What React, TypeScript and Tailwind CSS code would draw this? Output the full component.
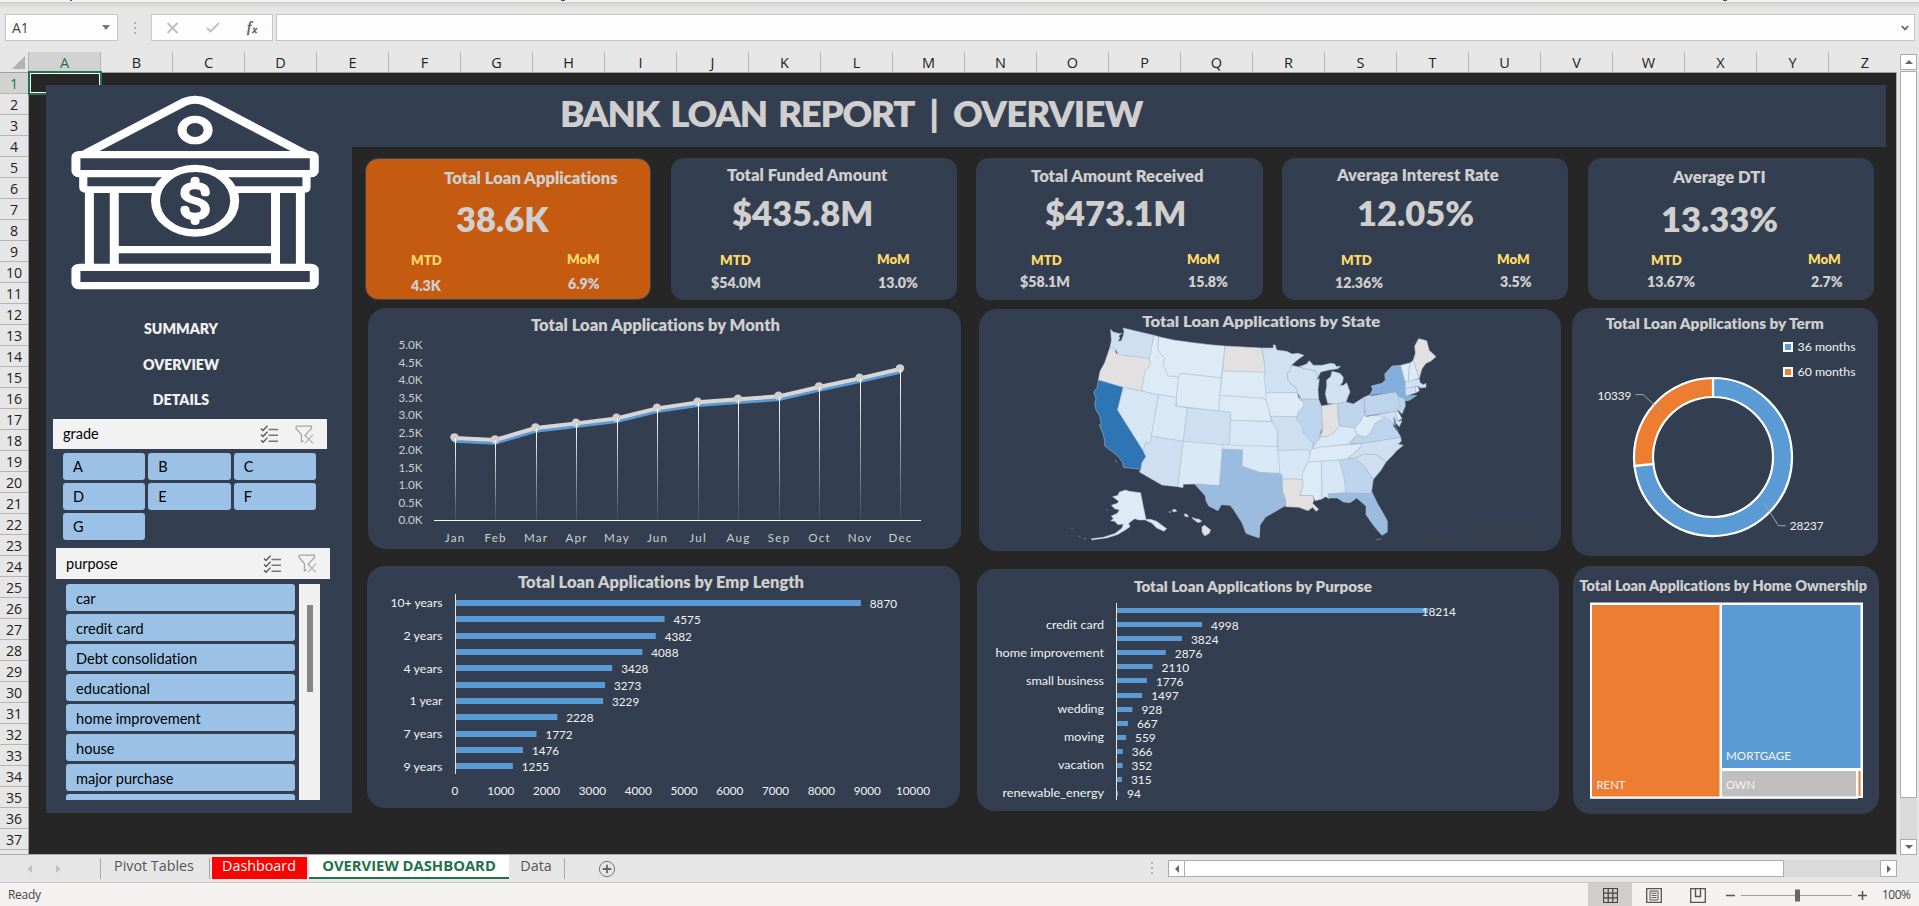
import React from "react";

const columns = "ABCDEFGHIJKLMNOPQRSTUVWXYZ".split("");
const rows = Array.from({ length: 37 }, (_, i) => i + 1);

type TProps = {
  x: number;
  y: number;
  w?: number;
  size?: number;
  anchor?: "start" | "middle" | "end";
  className?: string;
  children: React.ReactNode;
};

/* Chart label, y is the vertical centre of the capitals. */
function T({ x, y, w, size = 11.7, anchor = "start", className = "fill-[#f2f2f2]", children }: TProps) {
  return (
    <text
      x={x}
      y={y + size * 0.36}
      fontSize={size}
      textAnchor={anchor}
      textLength={w}
      lengthAdjust="spacingAndGlyphs"
      className={className}
    >
      {children}
    </text>
  );
}

const titleClass = "fill-[#d0cece] font-extrabold";

type Kpi = {
  title: string;
  total: string;
  mtd: string;
  mom: string;
  box: string;
  titlePos: string;
  totalPos: string;
  mtdPos: string;
  momPos: string;
  mtdValuePos: string;
  momValuePos: string;
};

const kpis: Kpi[] = [
  {
    title: "Total Loan Applications", total: "38.6K", mtd: "4.3K", mom: "6.9%",
    box: "w-[286px] bg-[#c55a11] border border-[#3c4454]",
    titlePos: "pl-[78px] pt-[9px]", totalPos: "pl-[90px] pt-[9px]",
    mtdPos: "left-[45px] top-[92px]", momPos: "left-[201px] top-[91px]",
    mtdValuePos: "left-[45px] top-[117px]", momValuePos: "left-[202px] top-[115px]",
  },
  {
    title: "Total Funded Amount", total: "$435.8M", mtd: "$54.0M", mom: "13.0%",
    box: "w-[286px] ml-[20px] bg-[#333f50]",
    titlePos: "pl-[56px] pt-[7px]", totalPos: "pl-[61px] pt-[6px]",
    mtdPos: "left-[49px] top-[93px]", momPos: "left-[206px] top-[92px]",
    mtdValuePos: "left-[40px] top-[115px]", momValuePos: "left-[207px] top-[115px]",
  },
  {
    title: "Total Amount Received", total: "$473.1M", mtd: "$58.1M", mom: "15.8%",
    box: "w-[287px] ml-[19px] bg-[#333f50]",
    titlePos: "pl-[55px] pt-[8px]", totalPos: "pl-[69px] pt-[5px]",
    mtdPos: "left-[55px] top-[93px]", momPos: "left-[211px] top-[92px]",
    mtdValuePos: "left-[44px] top-[114px]", momValuePos: "left-[212px] top-[114px]",
  },
  {
    title: "Averaga Interest Rate", total: "12.05%", mtd: "12.36%", mom: "3.5%",
    box: "w-[286px] ml-[19px] bg-[#333f50]",
    titlePos: "pl-[55px] pt-[7px]", totalPos: "pl-[75px] pt-[6px]",
    mtdPos: "left-[59px] top-[93px]", momPos: "left-[215px] top-[92px]",
    mtdValuePos: "left-[53px] top-[115px]", momValuePos: "left-[218px] top-[114px]",
  },
  {
    title: "Average DTI", total: "13.33%", mtd: "13.67%", mom: "2.7%",
    box: "w-[286px] ml-[20px] bg-[#333f50]",
    titlePos: "pl-[85px] pt-[9px]", totalPos: "pl-[73px] pt-[10px]",
    mtdPos: "left-[63px] top-[93px]", momPos: "left-[220px] top-[92px]",
    mtdValuePos: "left-[59px] top-[114px]", momValuePos: "left-[223px] top-[114px]",
  },
];

function KpiCard({ k }: { k: Kpi }) {
  return (
    <div className={`relative flex h-[142px] flex-col rounded-[13px] font-extrabold whitespace-nowrap text-[#d0cece] ${k.box}`}>
      <div className={`text-[16.6px] leading-[20px] ${k.titlePos}`}>{k.title}</div>
      <div className={`text-[34.5px] leading-[44px] ${k.totalPos}`}>{k.total}</div>
      <span className={`absolute text-[13.2px] leading-[18px] text-[#ffd966] ${k.mtdPos}`}>MTD</span>
      <span className={`absolute text-[13.2px] leading-[18px] text-[#ffd966] ${k.momPos}`}>MoM</span>
      <span className={`absolute text-[14.2px] leading-[20px] ${k.mtdValuePos}`}>{k.mtd}</span>
      <span className={`absolute text-[14.2px] leading-[20px] ${k.momValuePos}`}>{k.mom}</span>
    </div>
  );
}

function BankIcon() {
  return (
    <svg className="block h-[210px] w-[306px]" viewBox="46 85 306 210" fill="none">
      <g transform="scale(0.40816 0.33333)" stroke="#fff" strokeWidth="22">
        <path d="M208 462 L450 307 Q478 291 506 307 L748 462" strokeWidth="24" strokeLinejoin="round" />
        <circle cx="478" cy="390" r="32" />
        <rect x="186" y="464" width="584" height="57" rx="8" />
        <path d="M204 526 V562 Q204 569 212 569 H744 Q751 569 751 562 V526" strokeWidth="20" />
        <path d="M219 578 V793 M280 578 V793 M675 578 V793 M736 578 V793 M291 749 H664" />
        <rect x="186" y="802" width="584" height="55" rx="8" />
        <circle cx="478" cy="602" r="97" fill="#333f50" />
        <path d="M503 578 Q503 557 478 557 Q453 557 453 579 Q453 595 478 602 Q503 609 503 628 Q503 649 478 649 Q453 649 453 628 M478 541 V557 M478 649 V664" strokeWidth="22" strokeLinecap="round" />
      </g>
    </svg>
  );
}

function MultiSelectIcon() {
  return (
    <svg className="h-[18px] w-[18px]" viewBox="0 0 18 18" fill="none">
      <path d="M1 3.5 3 5.5 7.5 .8 M1 9.5 3 11.5 7.5 6.8 M1 15.3 3 17.3 7.5 12.6" stroke="#555" strokeWidth="1.3" />
      <path d="M8.5 4.5H18 M8.5 10.2H18 M8.5 16.2H18" stroke="#777" strokeWidth="1.4" />
    </svg>
  );
}

function ClearFilterIcon() {
  return (
    <svg className="h-[19px] w-[19px]" viewBox="0 0 19 19" fill="none" stroke="#a3a3a3" strokeWidth="1.2">
      <path d="M1 1.2H16.5V3.5L10.7 9.6V12 M1 1.2V3.5L6.4 9.6V17L8.6 15.6" />
      <path d="M9.5 10 18 18.3 M18 9.6 9.8 18.4" stroke="#b5b5b5" />
    </svg>
  );
}

function SlicerHeader({ label, className }: { label: string; className: string }) {
  return (
    <div className={`flex w-[274px] shrink-0 items-center bg-[#f2f2f2] pl-[10px] ${className}`}>
      <span className="grow text-[14.5px] leading-[20px] text-black">{label}</span>
      <MultiSelectIcon />
      <div className="w-[17px]" />
      <ClearFilterIcon />
      <div className="w-[13px]" />
    </div>
  );
}

const purposes = ["car", "credit card", "Debt consolidation", "educational", "home improvement", "house", "major purchase", ""];

function Sidebar() {
  return (
    <aside className="relative z-10 flex h-[728px] w-[306px] flex-col bg-[#333f50]">
      <BankIcon />
      <nav className="flex h-[124px] w-[270px] shrink-0 flex-col pt-[16px] text-center text-[14.2px] leading-[35.5px] font-extrabold text-[#f2f2f2]">
        <a>SUMMARY</a>
        <a>OVERVIEW</a>
        <a>DETAILS</a>
      </nav>
      <SlicerHeader label="grade" className="ml-[7px] h-[30px]" />
      <div className="mt-[4px] ml-[17px] grid w-[253px] shrink-0 grid-cols-3 gap-[3px]">
        {["A", "B", "C", "D", "E", "F", "G"].map((g) => (
          <div key={g} className="h-[27px] rounded-[3px] bg-[#9bc2e6] pl-[10px] text-[14.5px] leading-[28px] text-black">{g}</div>
        ))}
      </div>
      <SlicerHeader label="purpose" className="mt-[8px] ml-[10px] h-[31px]" />
      <div className="mt-[5px] ml-[20px] flex h-[216px] shrink-0 gap-[4px]">
        <div className="flex w-[229px] flex-col gap-[3px] overflow-hidden">
          {purposes.map((p) => (
            <div key={p} className="h-[27px] shrink-0 rounded-[3px] bg-[#9bc2e6] pl-[10px] text-[14.6px] leading-[29px] text-black">{p}</div>
          ))}
        </div>
        <div className="flex w-[21px] justify-center bg-[#f0f0f0] pt-[21px]">
          <div className="h-[87px] w-[6px] bg-[#868686]" />
        </div>
      </div>
    </aside>
  );
}

const monthly = [
  ["Jan", 412], ["Feb", 418], ["Mar", 382], ["Apr", 368], ["May", 353], ["Jun", 323],
  ["Jul", 305], ["Aug", 296], ["Sep", 287], ["Oct", 259], ["Nov", 233], ["Dec", 205],
] as [string, number][];

function MonthChart() {
  const pts = monthly.map(([m, v], i) => ({ m, x: 454.5 + i * 40.5, y: 300 + v / 3 }));
  const line = (dy: number) => pts.map((p) => `${p.x},${p.y + dy}`).join(" ");
  return (
    <svg className="block h-[241px] w-[593px] rounded-[18px] bg-[#333f50]" viewBox="368 308 593 241">
      <defs>
        <linearGradient id="drop" x1="0" y1="0" x2="0" y2="1">
          <stop offset="0" stopColor="#fff" />
          <stop offset="1" stopColor="#fff" stopOpacity="0.05" />
        </linearGradient>
      </defs>
      <T x={531} y={325} w={249} size={16.2} className={titleClass}>Total Loan Applications by Month</T>
      {Array.from({ length: 11 }, (_, i) => (
        <T key={i} x={422.5} y={345 + i * 17.5} w={24} anchor="end" className="fill-[#d0cece]">{(5 - i * 0.5).toFixed(1) + "K"}</T>
      ))}
      <rect x="434" y="520" width="487" height="1" fill="#f5f5f5" />
      <polyline points={line(3.6)} fill="none" stroke="#5b9bd5" strokeWidth="3.6" strokeLinejoin="round" strokeLinecap="round" />
      <polyline points={line(0.7)} fill="none" stroke="#d9d5d5" strokeWidth="4" strokeLinejoin="round" />
      {pts.map((p) => (
        <g key={p.m}>
          <circle cx={p.x} cy={p.y} r="4.2" fill="#d0cece" />
          <rect x={Math.round(p.x)} y={p.y + 1} width="1" height={519 - p.y} fill="url(#drop)" />
          <text x={p.x + 0.6} y={542} fontSize="11.6" letterSpacing="1.25" textAnchor="middle" fill="#d0cece">{p.m}</text>
        </g>
      ))}
    </svg>
  );
}

const emp = [
  ["10+ years", 8870, 52], ["", 4575, 0], ["2 years", 4382, 39], ["", 4088, 0], ["4 years", 3428, 39], ["", 3273, 0],
  ["1 year", 3229, 33], ["", 2228, 0], ["7 years", 1772, 39], ["", 1476, 0], ["9 years", 1255, 39],
] as [string, number, number][];

function EmpChart() {
  return (
    <svg className="block h-[242px] w-[593px] rounded-[18px] bg-[#333f50]" viewBox="367 566 593 242">
      <T x={518} y={582} w={286} size={16.2} className={titleClass}>Total Loan Applications by Emp Length</T>
      {emp.map(([label, v, w], i) => {
        const y = 603 + i * 16.32;
        return (
          <g key={v}>
            {label && <T x={442.5} y={y} w={w} size={12} anchor="end">{label}</T>}
            <rect x="455.5" y={Math.round(y - 3)} width={v * 0.0457} height="6" fill="#5b9bd5" />
            <T x={455.5 + v * 0.0457 + 9} y={y + 0.8}>{v}</T>
          </g>
        );
      })}
      <rect x="455" y="594" width="1" height="180" fill="#e6e6e6" />
      {Array.from({ length: 11 }, (_, i) => (
        <T key={i} x={455 + i * 45.8} y={791} anchor="middle">{i * 1000}</T>
      ))}
    </svg>
  );
}

const purposeData = [
  ["", 18214, 0], ["credit card", 4998, 58], ["", 3824, 0], ["home improvement", 2876, 108.5], ["", 2110, 0],
  ["small business", 1776, 78], ["", 1497, 0], ["wedding", 928, 46.5], ["", 667, 0], ["moving", 559, 40],
  ["", 366, 0], ["vacation", 352, 46], ["", 315, 0], ["renewable_energy", 94, 101.5],
] as [string, number, number][];

function PurposeChart() {
  return (
    <svg className="block h-[242px] w-[582px] rounded-[18px] bg-[#333f50]" viewBox="977 569 582 242">
      <T x={1134} y={586.4} w={238} size={15.2} className={titleClass}>Total Loan Applications by Purpose</T>
      {purposeData.map(([label, v, w], i) => {
        const y = 610.7 + i * 14.05;
        return (
          <g key={v}>
            {label && <T x={1104} y={y - 0.3} w={w} size={12.2} anchor="end">{label}</T>}
            <rect x="1116.5" y={Math.round(y - 2.5)} width={v * 0.01712} height="5" fill="#5b9bd5" />
            <T x={v > 18000 ? 1421.5 : 1116.5 + v * 0.01712 + 9} y={y + 0.7} size={11.9}>{v}</T>
          </g>
        );
      })}
      <rect x="1116" y="603" width="1" height="197" fill="#e6e6e6" />
    </svg>
  );
}

const states: [string, string, string][] = [
  ["WA", "#cddff0", "M152 88L160 96 180 101 186 100 176 108 180 114 174 124 184 122 190 106 192 94 189 84 282 106 268 176 232 171 196 167 174 162 168 150 150 142 154 122Z"],
  ["OR", "#e2e0e0", "M150 142L164 146 168 160 196 167 232 171 266 176 272 188 262 206 255 214 245 272 190 262 115 240 120 214 134 188Z"],
  ["CA", "#2e75b6", "M115 240L190 262 173 330 250 452 258 470 246 488 243 508 190 502 188 488 176 472 166 462 150 450 134 438 134 422 130 404 118 374 124 370 118 346 108 330 104 312 108 296 101 276 112 262Z"],
  ["NV", "#d6e6f4", "M190 262L296 284 274 408 270 430 258 426 250 452 173 330Z"],
  ["ID", "#ddebf7", "M282 106L296 110 293 144 300 158 314 174 308 198 316 206 324 228 356 230 349 292 296 284 245 272 255 214 262 206 272 188 268 176Z"],
  ["MT", "#ddebf7", "M296 110L340 120 400 128 450 134 495 138 484 234 362 220 356 230 324 228 316 206 308 198 314 174 300 158 293 144Z"],
  ["WY", "#ddebf7", "M362 220L484 234 476 333 349 318 349 292 356 230Z"],
  ["UT", "#d9e8f6", "M296 284L349 292 347 318 382 324 370 424 274 408Z"],
  ["CO", "#cddff0", "M382 324L512 336 508 437 370 424Z"],
  ["AZ", "#cddff0", "M274 408L370 424 353 560 306 555 238 516 243 508 246 488 258 470 250 452 258 426 270 430Z"],
  ["NM", "#d9e8f6", "M370 424L488 434 478 557 404 552 370 553 369 563 353 560Z"],
  ["ND", "#e2e0e0", "M495 138L606 144 612 180 616 217 488 213Z"],
  ["SD", "#ddebf7", "M488 213L616 217 614 230 618 278 618 300 606 294 590 294 480 286Z"],
  ["NE", "#ddebf7", "M480 286L590 294 606 294 618 300 626 324 634 364 512 361 512 336 476 333Z"],
  ["KS", "#d9e8f6", "M512 361L638 365 642 376 652 388 652 440 508 437Z"],
  ["OK", "#d9e8f6", "M488 434L652 440 658 480 660 520 630 520 600 517 572 508 546 498 548 450 487 447Z"],
  ["TX", "#9bbcdf", "M487 447L548 450 546 498 572 508 600 517 660 520 667 526 668 574 678 602 674 618 650 632 616 652 600 676 598 714 580 708 558 700 546 668 520 628 510 616 484 614 474 632 446 618 438 602 436 588 404 552 478 557Z"],
  ["MN", "#cfe1f2", "M606 144L640 144 640 134 646 136 650 150 680 154 696 162 714 160 732 166 712 180 694 196 690 212 682 220 684 242 712 268 712 278 618 278 612 230 616 217 612 180Z"],
  ["IA", "#ddebf7", "M618 278L712 278 716 296 732 308 730 322 714 336 712 350 632 349 626 324 618 300Z"],
  ["MO", "#cddff0", "M632 349L710 350 712 364 730 382 728 396 748 418 760 432 756 446 750 462 742 450 654 451 652 388 642 376Z"],
  ["AR", "#d6e6f4", "M654 451L742 450 750 462 746 484 736 500 728 520 727 538 668 537 667 526 660 520Z"],
  ["LA", "#e2e0e0", "M668 537L727 538 730 556 720 586 757 586 762 600 758 610 776 628 768 634 758 622 744 632 716 622 676 620 678 602 668 574Z"],
  ["WI", "#cfe1f2", "M694 196L714 200 740 208 766 212 774 226 770 240 778 236 774 270 776 298 724 297 712 278 712 268 684 242 682 220 690 212Z"],
  ["UP", "#cfe1f2", "M718 200L740 192 748 182 760 196 786 196 812 190 824 192 830 200 842 198 834 206 806 210 782 216 770 240 774 226 766 212 740 208Z"],
  ["MI", "#cfe1f2", "M803 310L796 282 800 258 800 240 812 230 816 214 840 220 850 232 848 246 840 256 850 256 860 248 870 276 864 290 858 306 832 312Z"],
  ["IL", "#bdd4ec", "M724 297L776 298 784 318 788 384 780 400 778 412 766 434 748 418 728 396 730 382 712 364 714 336 730 322 732 308Z"],
  ["IN", "#e2e0e0", "M784 318L832 310 838 380 820 400 800 410 782 412 788 384Z"],
  ["OH", "#bdd4ec", "M832 312L858 306 880 312 912 292 914 340 900 366 884 384 860 380 838 378Z"],
  ["KY", "#d9e8f6", "M760 446L764 434 782 412 800 410 820 400 838 378 860 380 884 384 892 404 866 432 780 442Z"],
  ["TN", "#ddebf7", "M754 448L780 442 908 430 896 448 862 476 838 480 744 486Z"],
  ["MS", "#ddebf7", "M744 486L784 484 786 597 766 602 757 586 720 586 730 556 727 538 728 520Z"],
  ["AL", "#d6e6f4", "M784 484L838 480 852 530 858 578 804 582 808 596 796 590 786 597Z"],
  ["GA", "#bdd4ec", "M838 480L884 474 914 500 940 538 934 580 858 580 852 530Z"],
  ["FL", "#9bbcdf", "M804 582L858 578 934 580 934 572 952 610 972 644 982 664 982 696 966 706 950 688 936 670 918 644 918 618 890 594 870 608 850 606 832 594 808 594Z"],
  ["SC", "#cddff0", "M884 474L912 462 950 464 978 486 962 512 940 538 914 500Z"],
  ["NC", "#cddff0", "M908 430L1022 412 1024 424 1014 432 1030 436 1010 452 996 468 978 486 950 464 912 462 884 474 862 476 896 448Z"],
  ["VA", "#bdd4ec", "M866 432L892 404 916 412 930 400 946 370 972 348 996 358 1000 378 1016 400 1022 412 908 430Z"],
  ["WV", "#ddebf7", "M914 340L918 350 944 346 970 346 972 352 946 370 930 400 916 412 892 404 884 384 900 366Z"],
  ["MD", "#cfe1f2", "M944 346L1006 334 1014 364 1026 362 1018 380 1008 370 1000 350 1004 376 990 360 972 350Z"],
  ["DE", "#ddebf7", "M1006 334L1014 334 1026 356 1014 362Z"],
  ["PA", "#bdd4ec", "M912 292L930 284 932 288 1006 276 1018 292 1014 304 1022 318 1010 334 916 348Z"],
  ["NJ", "#bdd4ec", "M1018 288L1034 296 1036 318 1026 342 1012 328 1022 318 1014 304Z"],
  ["NY", "#84aedb", "M930 284L938 268 934 258 966 250 976 240 974 222 996 198 1022 196 1030 226 1036 246 1038 288 1070 286 1050 300 1034 304 1032 296 1018 292 1006 276Z"],
  ["VT", "#ddebf7", "M1022 196L1052 188 1046 216 1046 246 1036 246 1030 226Z"],
  ["NH", "#ddebf7", "M1052 188L1060 180 1070 212 1078 234 1046 246 1046 216Z"],
  ["ME", "#e2e0e0", "M1060 180L1066 160 1064 138 1076 116 1092 120 1100 122 1108 152 1116 158 1128 170 1112 184 1098 190 1086 206 1078 234 1070 212Z"],
  ["MA", "#cfe1f2", "M1036 246L1078 236 1080 248 1090 254 1098 250 1098 262 1082 264 1074 258 1036 266Z"],
  ["CT", "#cfe1f2", "M1036 266L1066 260 1068 278 1038 288Z"],
  ["RI", "#ddebf7", "M1066 260L1074 260 1078 272 1068 278Z"],
  ["AK", "#ddebf7", "M158 590L174 586 178 576 196 570 208 574 242 578 250 620 258 658 272 658 290 664 304 674 320 686 312 694 290 684 276 670 256 660 236 660 224 656 206 670 210 680 196 690 172 704 140 714 110 718 96 720 94 716 130 712 166 700 186 684 190 672 174 674 164 664 152 662 160 656 154 648 172 640 178 630 164 626 154 616 172 610 176 604Z"],
  ["H1", "#e2e0e0", "M426 680L434 676 452 690 448 700 434 708 426 696Z"],
  ["H2", "#e2e0e0", "M396 652L406 656 418 658 426 664 414 668 400 658Z"],
  ["H3", "#e2e0e0", "M372 642L380 642 386 650 376 650Z"],
  ["H4", "#e2e0e0", "M336 630L346 628 350 634 340 636Z"],
  ["H5", "#e2e0e0", "M328 634L332 636 328 638Z"],
];

function StateMap() {
  return (
    <svg className="block h-[242px] w-[582px] rounded-[18px] bg-[#333f50]" viewBox="979 309 582 242">
      <g transform="translate(1060 300) scale(0.33333)" stroke="#b2c1d1" strokeWidth="1.6" strokeLinejoin="round">
        <path d="M180 160L290 130 600 160 640 250 710 290 770 310 770 400 880 400 860 480 900 560 790 570 660 560 600 600 500 560 300 520 200 400 140 260Z" fill="#b2c1d1" />
        {states.map(([id, fill, d]) => (
          <path key={id} d={d} fill={fill} />
        ))}
        <path d="M34 685h4M56 708l6 3M70 715l8 2M138 628l5 3M150 442l-4-4M948 720l16-4M166 478l4 10M1004 352l4 30 8 12" fill="none" stroke="#7d8a9b" strokeWidth="2.5" />
      </g>
      <T x={1142.3} y={322} w={238} size={15.2} className={titleClass}>Total Loan Applications by State</T>
      <text x={1535} y={531} fontSize="8.5" textAnchor="end" fill="#3b4047">Powered by Bing</text>
      <text x={1535} y={541} fontSize="8.5" textAnchor="end" fill="#3b4047">© GeoNames, Microsoft, TomTom</text>
    </svg>
  );
}

function TermChart() {
  const cx = 1713;
  const cy = 457;
  const a = (-96.5 * Math.PI) / 180;
  const at = (r: number) => `${cx + r * Math.sin(a)} ${cy - r * Math.cos(a)}`;
  const ro = 79;
  const ri = 60;
  return (
    <svg className="block h-[248px] w-[306px] rounded-[18px] bg-[#333f50]" viewBox="1572 308 306 248">
      <T x={1605.7} y={323.5} w={218} size={14.4} className={titleClass}>Total Loan Applications by Term</T>
      <rect x="1784" y="343" width="8" height="8" fill="#5b9bd5" stroke="#fff" strokeWidth="2" />
      <T x={1797.5} y={347} w={58}>36 months</T>
      <rect x="1784" y="368" width="8" height="8" fill="#ed7d31" stroke="#fff" strokeWidth="2" />
      <T x={1797.5} y={372} w={58}>60 months</T>
      <g stroke="#fff" strokeWidth="2.2">
        <path d={`M${cx} ${cy - ro}A${ro} ${ro} 0 1 1 ${at(ro)}L${at(ri)}A${ri} ${ri} 0 1 0 ${cx} ${cy - ri}Z`} fill="#5b9bd5" />
        <path d={`M${at(ro)}A${ro} ${ro} 0 0 1 ${cx} ${cy - ro}V${cy - ri}A${ri} ${ri} 0 0 0 ${at(ri)}Z`} fill="#ed7d31" />
      </g>
      <path d="M1635.5 394.6H1643L1661.7 411.5M1764 503L1778.5 525.7H1785.5" fill="none" stroke="#a6a6a6" />
      <T x={1597.5} y={396}>10339</T>
      <T x={1789.7} y={526}>28237</T>
    </svg>
  );
}

function HomeChart() {
  return (
    <svg className="block h-[248px] w-[306px] rounded-[18px] bg-[#333f50]" viewBox="1573 566 306 248">
      <T x={1579.5} y={585.5} w={287.5} size={14.4} className={titleClass}>Total Loan Applications by Home Ownership</T>
      <rect x="1590" y="602.5" width="273" height="195.5" fill="#fff" />
      <rect x="1590" y="798" width="268" height="1" fill="#d5d8dc" />
      <rect x="1592" y="605" width="127.5" height="191.5" fill="#ed7d31" />
      <rect x="1722" y="605" width="138.5" height="163" fill="#5b9bd5" />
      <rect x="1722" y="771" width="134" height="25.5" fill="#bfbfbf" />
      <rect x="1858.5" y="771" width="2" height="25" fill="#ed7d31" />
      <T x={1596.5} y={785} w={29}>RENT</T>
      <T x={1726} y={756} w={65}>MORTGAGE</T>
      <T x={1726} y={785} w={29}>OWN</T>
    </svg>
  );
}

function Dashboard() {
  return (
    <>
      <Sidebar />
      <main className="flex w-[1534px] flex-col">
        <h1 className="h-[62px] bg-[#333f50] pl-[208px] text-[36.6px] leading-[57px] font-extrabold tracking-[-1.3px] [word-spacing:4px] whitespace-nowrap text-[#d0cece]">
          BANK LOAN REPORT <span className="mr-[4px] ml-[5px]">|</span> <span className="tracking-[-0.8px]">OVERVIEW</span>
        </h1>
        <section className="mt-[11px] ml-[13px] flex">
          {kpis.map((k) => <KpiCard key={k.title} k={k} />)}
        </section>
        <section className="mt-[8px] ml-[16px] flex">
          <MonthChart />
          <div className="mt-[1px] ml-[18px]"><StateMap /></div>
          <div className="ml-[11px]"><TermChart /></div>
        </section>
        <section className="mt-[10px] ml-[15px] flex">
          <EmpChart />
          <div className="mt-[3px] ml-[17px]"><PurposeChart /></div>
          <div className="ml-[14px]"><HomeChart /></div>
        </section>
      </main>
    </>
  );
}

function FormulaBar() {
  return (
    <div className="flex h-[27px] shrink-0 pl-[5px] font-['Open_Sans',sans-serif]">
      <div className="flex w-[113px] items-center justify-between border border-[#c6c6c6] bg-[#fdfdfd] pr-[7px] pl-[6px]">
        <span className="text-[14px] text-[#444]">A1</span>
        <svg className="h-[5px] w-[8px]" viewBox="0 0 8 5"><path d="M0 0H8L4 5Z" fill="#777" /></svg>
      </div>
      <div className="flex w-[33px] items-center justify-center">
        <svg className="h-[12px] w-[2px]" viewBox="0 0 2 12"><path d="M0 0h2v2H0zM0 5h2v2H0zM0 10h2v2H0z" fill="#b0b0b0" /></svg>
      </div>
      <div className="flex w-[122px] items-center border border-[#c6c6c6] bg-[#fdfdfd] pl-[14px]">
        <svg className="h-[12px] w-[13px]" viewBox="0 0 13 12"><path d="M1.5 1L11.5 11M11.5 1L1.5 11" stroke="#bdbdbd" strokeWidth="1.8" /></svg>
        <svg className="ml-[27px] h-[11px] w-[14px]" viewBox="0 0 14 11"><path d="M1 6L4.5 9.5 13 1" fill="none" stroke="#c2c2c2" strokeWidth="2" /></svg>
        <svg className="ml-[26px] h-[18px] w-[14px] font-['Liberation_Serif',serif] italic" viewBox="0 0 14 18" fill="#555" stroke="#555" strokeWidth="0.4">
          <text x="1" y="13" fontSize="15">f</text>
          <text x="6.2" y="14" fontSize="11">x</text>
        </svg>
      </div>
      <div className="ml-[3px] flex w-[1639px] items-center justify-end border border-[#c6c6c6] bg-[#fdfdfd] pr-[5px]">
        <svg className="h-[6px] w-[8px]" viewBox="0 0 8 6"><path d="M.8 1L4 4.4 7.2 1" fill="none" stroke="#666" strokeWidth="1.8" /></svg>
      </div>
    </div>
  );
}

function Arrow({ d }: { d: string }) {
  return (
    <svg className="h-[8px] w-[8px]" viewBox="0 0 8 8"><path d={d} fill="#666" /></svg>
  );
}

function SheetTabs() {
  return (
    <div className="flex h-[27px] shrink-0 font-['Open_Sans',sans-serif] text-[14.3px] whitespace-nowrap text-[#555]">
      <div className="flex w-[100px] items-center pl-[27px]">
        <svg className="h-[8px] w-[5px]" viewBox="0 0 5 8"><path d="M5 0V8L0 4Z" fill="#c2c2c2" /></svg>
        <svg className="ml-[24px] h-[8px] w-[5px]" viewBox="0 0 5 8"><path d="M0 0V8L5 4Z" fill="#c2c2c2" /></svg>
      </div>
      <div className="mt-[3px] h-[21px] w-[110px] border-x border-[#a6a6a6] pr-[2px] text-center leading-[15px]">Pivot Tables</div>
      <div className="mt-[2px] ml-[2px] h-[22px] w-[95px] bg-[#f00] pr-[1px] text-center leading-[17px] text-white">Dashboard</div>
      <div className="ml-[2px] h-[24px] w-[200px] border-b-2 border-[#217346] bg-white text-center text-[14.8px] leading-[20px] font-bold text-[#217346]">OVERVIEW DASHBOARD</div>
      <div className="mt-[3px] h-[21px] w-[56px] border-r border-[#a6a6a6] pr-[1px] text-center leading-[15px]">Data</div>
      <svg className="mt-[5px] ml-[33px] h-[18px] w-[18px]" viewBox="0 0 18 18" fill="none">
        <circle cx="9" cy="9" r="7.6" stroke="#777" /><path d="M9 4.8V13.2M4.8 9H13.2" stroke="#666" strokeWidth="1.8" />
      </svg>
      <div className="grow" />
      <svg className="mt-[7px] h-[13px] w-[2px]" viewBox="0 0 2 13"><path d="M0 0h2v2H0zM0 5h2v2H0zM0 10h2v2H0z" fill="#b0b0b0" /></svg>
      <div className="mt-[5px] mr-[22px] ml-[15px] flex h-[17px] w-[729px] bg-[#dadada]">
        <div className="flex w-[17px] items-center justify-center border border-[#ababab] bg-white"><Arrow d="M6 0V8L2 4Z" /></div>
        <div className="w-[599px] border border-l-0 border-[#ababab] bg-white" />
        <div className="grow" />
        <div className="flex w-[17px] items-center justify-center border border-[#ababab] bg-white"><Arrow d="M2 0V8L6 4Z" /></div>
      </div>
    </div>
  );
}

function StatusBar() {
  return (
    <div className="flex h-[25px] shrink-0 items-center border-t border-[#c6c6c6] bg-[#f3f2f1] font-['Open_Sans',sans-serif] text-[12px] text-[#444]">
      <span className="ml-[8px] grow tracking-[-0.3px]">Ready</span>
      <div className="flex h-full w-[44px] items-center justify-center bg-[#d0cecd]">
        <svg className="h-[15px] w-[15px]" viewBox="0 0 15 15" fill="none" stroke="#444"><path d="M.5 .5H14.5V14.5H.5ZM5.2 .5V14.5M9.8 .5V14.5M.5 5.2H14.5M.5 9.8H14.5" strokeWidth="1.2" /></svg>
      </div>
      <svg className="ml-[14px] h-[15px] w-[16px]" viewBox="0 0 16 15" fill="none" stroke="#555"><path d="M.7 .7H15.3V14.3H.7Z" strokeWidth="1.3" /><path d="M4 3H12V12H4ZM5.5 5.2H10.5M5.5 7.4H10.5M5.5 9.6H10.5" strokeWidth="1" /></svg>
      <svg className="ml-[28px] h-[15px] w-[16px]" viewBox="0 0 16 15" fill="none" stroke="#555"><path d="M.7 14.3V.7H15.3V14.3Z" strokeWidth="1.3" /><path d="M5.5 .7V8.5H10.5V.7" strokeWidth="1.4" /></svg>
      <svg className="ml-[20px] h-[13px] w-[142px]" viewBox="0 0 142 13">
        <path d="M0 6.5H9M132 6.5H141M136.5 2V11" stroke="#555" strokeWidth="1.5" />
        <path d="M15 6.5H126" stroke="#a0a0a0" />
        <rect x="69" y="0.5" width="5" height="12" fill="#666" />
      </svg>
      <span className="ml-[14px] w-[37px] text-[12px] tracking-[-0.5px]">100%</span>
    </div>
  );
}

export default function App() {
  return (
    <div className="flex h-[906px] w-[1919px] flex-col overflow-hidden bg-[#e6e6e6] font-['Lato','Liberation_Sans',sans-serif] [font-variant-ligatures:none]">
      <div className="relative h-[14px] shrink-0 bg-linear-to-b from-[#c9c7c5] to-[#e6e6e6] to-60%">
        <div className="h-[2px] bg-[#f3f2f1]" />
        <div className="absolute top-0 left-[70px] h-[1px] w-[2px] bg-[#555]" />
        <div className="absolute top-0 left-[561px] h-[1px] w-[4px] bg-[#555]" />
        <div className="absolute top-0 left-[1723px] h-[1px] w-[4px] bg-[#555]" />
      </div>
      <FormulaBar />
      <div className="mt-[11px] flex h-[803px] shrink-0">
        <div className="flex w-[1897px] flex-col">
          <div className="flex h-[21px] shrink-0 border-b border-[#9f9f9f] font-['Open_Sans',sans-serif] text-[14.5px] leading-[21px] text-[#222]">
            <div className="flex w-[29px] items-end justify-end border-r border-[#b5b5b5] pr-[3px] pb-[3px]">
              <svg className="h-[13px] w-[13px]" viewBox="0 0 13 13"><path d="M13 0V13H0Z" fill="#b2b2b2" /></svg>
            </div>
            {columns.map((c) => (
              <div key={c} className={c === "A" ? "w-[72px] border-r border-[#b5b5b5] bg-[#d2d2d2] text-center text-[#217346]" : c === "Z" ? "w-[68px] pl-[4px] text-center" : "w-[72px] border-r border-[#b5b5b5] text-center"}>{c}</div>
            ))}
          </div>
          <div className="flex h-[782px] border-b border-[#ababab]">
            <div className="flex w-[29px] shrink-0 flex-col border-r border-[#9f9f9f] text-center font-['Open_Sans',sans-serif] text-[14.2px] leading-[21px] text-[#222]">
              {rows.map((r) => (
                <div key={r} className={r === 1 ? "h-[21px] border-b border-[#b5b5b5] bg-[#d2d2d2] text-[#217346]" : "h-[21px] border-b border-[#b5b5b5]"}>{r}</div>
              ))}
            </div>
            <div className="relative flex w-[1868px] border-r border-[#ababab] bg-[#262626] pt-[12px] pl-[17px]">
              <div className="absolute -top-[2px] -left-[1px] h-[24px] w-[74px] border-2 border-[#217346]">
                <div className="h-full w-full border border-white" />
              </div>
              <Dashboard />
            </div>
          </div>
        </div>
        <div className="flex w-[20px] flex-col pt-[2px] pl-[3px]">
          <div className="flex h-[16px] w-[17px] shrink-0 items-center justify-center border border-[#ababab] bg-white"><Arrow d="M0 6H8L4 2Z" /></div>
          <div className="mt-[1px] h-[727px] w-[17px] shrink-0 border border-[#ababab] bg-white" />
          <div className="h-[41px] w-[17px] shrink-0 bg-[#dadada]" />
          <div className="flex h-[16px] w-[17px] shrink-0 items-center justify-center border border-[#ababab] bg-white"><Arrow d="M0 2H8L4 6Z" /></div>
        </div>
      </div>
      <SheetTabs />
      <StatusBar />
    </div>
  );
}
